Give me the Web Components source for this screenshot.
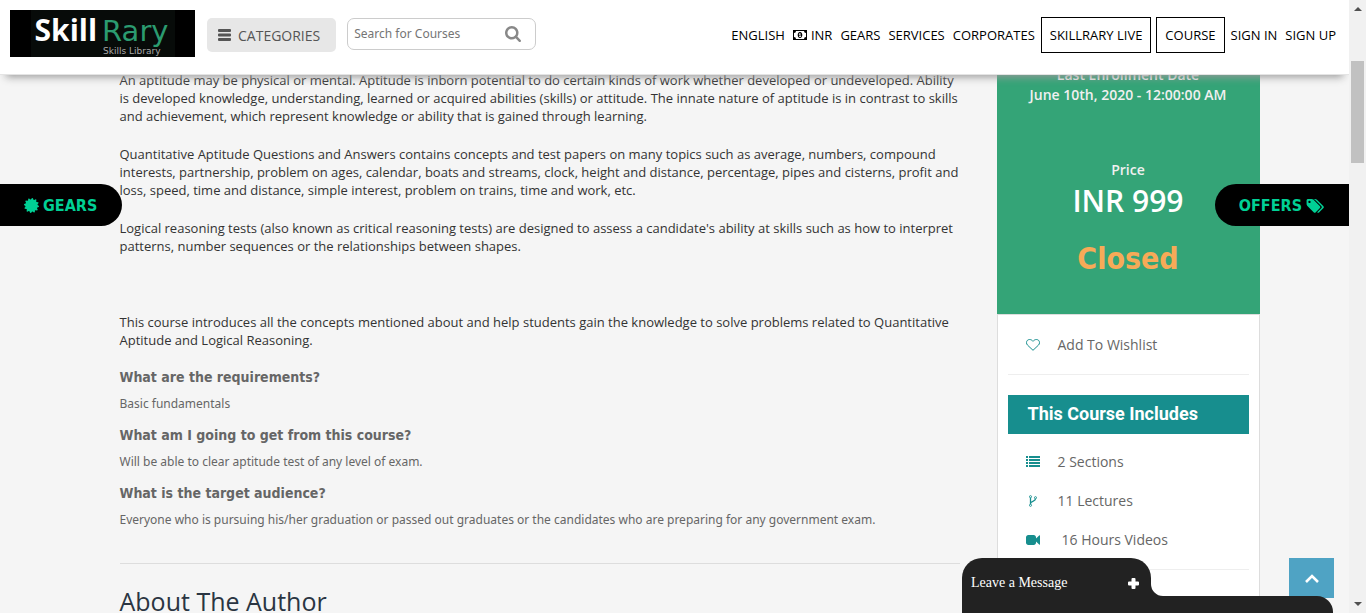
<!DOCTYPE html>
<html lang="en">
<head>
<meta charset="utf-8">
<title>SkillRary - Course</title>
<style>
html,body{margin:0;height:100%;overflow:hidden}
body{background:#f5f5f5;font-family:"Open Sans","Noto Sans",sans-serif;color:#333}
</style>
</head>
<body>
<course-page></course-page>
<script>
const burst = Array.from({length:48},(_,i)=>{const r=i%4<2?100:82,a=Math.PI*(i+.5)/24;return (100+r*Math.cos(a)).toFixed(1)+','+(100+r*Math.sin(a)).toFixed(1)}).join(' ');
const ICONS = {
  bars:['0 0 13 12','<path d="M1 0h11q1 0 1 1v1q0 1-1 1H1q-1 0-1-1V1q0-1 1-1zM1 4.500h11q1 0 1 1v1q0 1-1 1H1q-1 0-1-1v-1q0-1 1-1zM1 9h11q1 0 1 1v1q0 1-1 1H1q-1 0-1-1v-1q0-1 1-1z"/>'],
  search:['64 128 1664 1664','<path d="M1216 832q0-185-131.500-316.500t-316.500-131.500-316.500 131.500-131.500 316.500 131.500 316.500 316.500 131.500 316.500-131.500 131.500-316.500zm512 832q0 52-38 90t-90 38q-54 0-90-38l-343-342q-179 124-399 124-143 0-273.500-55.500t-225-150-150-225-55.500-273.500 55.500-273.500 150-225 225-150 273.500-55.500 273.500 55.500 225 150 150 225 55.500 273.500q0 220-124 399l343 343q37 37 37 90z"/>'],
  money:['0 0 14 10','<path fill-rule="evenodd" d="M0 0h14v10H0zM1 3v4q2 0 2 2h8q0-2 2-2V3q-2 0-2-2H3q0 2-2 2z"/><path fill-rule="evenodd" d="M7 2C5.400 2 4.700 3.500 4.700 5S5.400 8 7 8s2.300-1.500 2.300-3S8.600 2 7 2zM6.600 3.200h.9v3h.6v.7H6v-.7h.6V4.400l-.6.300-.2-.7z"/>'],
  burst:['0 0 200 200','<polygon points="'+burst+'"/>'],
  tags:['64 128 1984 1536','<path d="M576 448q0-53-37.500-90.500t-90.500-37.500-90.500 37.500-37.500 90.500 37.500 90.500 90.500 37.500 90.500-37.500 37.500-90.500zm1067 576q0 53-37 90l-491 492q-39 37-91 37-53 0-90-37l-715-716q-38-37-64.500-101t-26.500-117v-416q0-52 38-90t90-38h416q53 0 117 26.500t102 64.500l715 714q37 39 37 91zm384 0q0 53-37 90l-491 492q-39 37-91 37-36 0-59-14t-53-45l470-470q37-37 37-90 0-52-37-91l-715-714q-38-38-102-64.500t-117-26.500h224q53 0 117 26.500t102 64.500l715 714q37 39 37 91z"/>'],
  heart:['0 0 14 12','<path fill="none" stroke="currentColor" d="M7 11.300L1.600 6.200C.8 5.400.5 4.600.5 3.700.5 1.700 1.800.5 3.700.5 5 .5 6.200 1.300 7 2.300 7.800 1.300 9 .5 10.300.5c1.900 0 3.200 1.200 3.200 3.200 0 .9-.3 1.700-1.100 2.500z"/>'],
  list:['0 0 14 11','<path d="M0 0h2v2H0zM3 0h11v2H3zM0 3h2v2H0zM3 3h11v2H3zM0 6h2v2H0zM3 6h11v2H3zM0 9h2v2H0zM3 9h11v2H3z"/>'],
  fork:['0 0 8 12','<g fill="none" stroke="currentColor" stroke-width=".9"><circle cx="1.500" cy="1.700" r="1.050"/><circle cx="1.500" cy="10.300" r="1.050"/><circle cx="6.500" cy="2.700" r="1.050"/></g><path fill="none" stroke="currentColor" stroke-width="1.300" d="M1.500 2.700v6.600M6.500 3.800c0 2.800-5 2.200-5 4.600"/>'],
  video:['0 256 1792 1280','<path d="M1792 352v1088q0 42-39 59-13 5-25 5-27 0-45-19l-403-403v166q0 119-84.500 203.500t-203.500 84.500h-704q-119 0-203.500-84.500t-84.500-203.500v-704q0-119 84.500-203.500t203.500-84.500h704q119 0 203.500 84.500t84.500 203.500v165l403-402q18-19 45-19 12 0 25 5 39 17 39 59z"/>'],
  plus:['0 0 11 11','<path d="M4.500 0h2q1 0 1 1v2.500H10q1 0 1 1v2q0 1-1 1H7.500V10q0 1-1 1h-2q-1 0-1-1V7.500H1q-1 0-1-1v-2q0-1 1-1h2.500V1q0-1 1-1z"/>'],
  up:['0 0 14 9','<path fill="none" stroke="currentColor" stroke-width="2.600" d="M1 8l6-6 6 6"/>'],
  arrowup:['0 0 8 4','<path d="M0 4l4-4 4 4z"/>'],
  arrowdown:['0 0 8 4','<path d="M0 0l4 4 4-4z"/>'],
  fillet:['0 0 12 12','<path d="M0 0a12 12 0 0 0 12 12H0z"/>']
};
function define(name, html, setup){
  const t=document.createElement('template'); t.innerHTML=html;
  customElements.define(name, class extends HTMLElement{
    constructor(){super();this.attachShadow({mode:'open'}).append(t.content.cloneNode(true));}
    connectedCallback(){ if(setup) setup(this,this.shadowRoot); }
  });
}
const BASE=':host,*{box-sizing:border-box}a{color:inherit;text-decoration:none}button{font:inherit;color:inherit;border:0;padding:0;background:none}';

define('ui-icon','<style>:host{display:inline-block;flex:none}svg{display:block;width:100%;height:100%;fill:currentColor}</style><svg aria-hidden="true"></svg>',(el,r)=>{
  const [box,body]=ICONS[el.getAttribute('name')], s=r.querySelector('svg');
  s.setAttribute('viewBox',box); s.innerHTML=body;
});

define('site-logo',`<style>${BASE}
:host{display:block;flex:none}
a{display:grid;justify-content:center;width:185px;height:47px;background:#000}
.in{width:144px;background:#070b09;display:grid;grid-template-rows:34px 10px;padding:2px 4px 0}
.n{font-size:30px;line-height:36px;color:#fff;white-space:nowrap;display:flex;align-items:baseline;gap:5px}
.n i{font:29px/36px "DejaVu Sans",sans-serif;color:#2b9b70}
small{font:9px/10px "DejaVu Sans",sans-serif;color:#aaa;text-align:right;padding-right:10px;white-space:nowrap}
</style><a href="#"><span class="in"><span class="n"><b>Skill</b><i>Rary</i></span><small>Skills Library</small></span></a>`);

define('nav-link',`<style>${BASE}
:host{display:block;font-size:13px;line-height:18px;color:#000;white-space:nowrap}
a{display:flex;align-items:center;gap:4px;height:36px}
:host([boxed]) a{border:1px solid #000;padding:0 8px}
</style><a href="#"><slot></slot></a>`);

define('site-header',`<style>${BASE}
:host{display:flex;align-items:flex-start;position:absolute;inset:0 0 auto;height:75px;padding:10px 13px 0 10px;background:#fff;border-bottom:1px solid #e4e4e4;box-shadow:0 8px 8px -6px #999;z-index:3}
.cat{display:flex;align-items:center;gap:7px;height:34px;margin:8px 11px 0 12px;padding:0 16px 0 11px;background:#e7e7e7;border-radius:5px;font-size:14px;color:#555}
form{display:flex;align-items:center;width:189px;height:32px;margin-top:8px;border:1px solid #ccc;border-radius:7px;padding:0 14px 0 6px}
input{flex:1;min-width:0;border:0;outline:0;padding:0;background:none;font:12px/18px "Noto Sans",sans-serif;color:#555}
input::placeholder{color:#757575;opacity:1}
form button{display:flex;color:#888}
nav{display:flex;margin:7px 0 0 auto}
nav>*{margin-right:8px}
nav>.t{margin-right:6px}nav>.s{margin-right:5px}nav>:last-child{margin-right:0}
.bars{width:13px;height:12px}.se{width:16px;height:16px}.mo{width:14px;height:10px}
</style>
<site-logo></site-logo>
<button class="cat"><ui-icon class="bars" name="bars"></ui-icon>CATEGORIES</button>
<form role="search"><input type="text" aria-label="Search for Courses" placeholder="Search for Courses"><button type="button" aria-label="Search"><ui-icon class="se" name="search"></ui-icon></button></form>
<nav><nav-link>ENGLISH</nav-link><nav-link><ui-icon class="mo" name="money"></ui-icon>INR</nav-link><nav-link>GEARS</nav-link><nav-link>SERVICES</nav-link><nav-link class="t">CORPORATES</nav-link><nav-link boxed class="s">SKILLRARY LIVE</nav-link><nav-link boxed class="t">COURSE</nav-link><nav-link>SIGN IN</nav-link><nav-link>SIGN UP</nav-link></nav>`);

define('faq-item',`<style>
:host{display:block;color:#666}
h4{margin:0;font:bold 14px/22px "DejaVu Sans Condensed","Noto Sans",sans-serif}
p{margin:5px 0 9px;font:12px/22px "Noto Sans",sans-serif}
</style><h4><slot name="q"></slot></h4><p><slot></slot></p>`);

define('course-description',`<style>
:host{display:block;padding-top:71px}
p{margin:0 0 20px;font-size:13px;line-height:18px;color:#333}
.gap{margin-bottom:58px}.last{margin-bottom:17px}
hr{border:0;border-top:1px solid #ddd;margin:32px 0 20px}
h2{margin:0;font-size:25px;font-weight:400;line-height:34px;color:#2a3542}
</style>
<p>An aptitude may be physical or mental. Aptitude is inborn potential to do certain kinds of work whether developed or undeveloped. Ability is developed knowledge, understanding, learned or acquired abilities (skills) or attitude. The innate nature of aptitude is in contrast to skills and achievement, which represent knowledge or ability that is gained through learning.</p>
<p>Quantitative Aptitude Questions and Answers contains concepts and test papers on many topics such as average, numbers, compound interests, partnership, problem on ages, calendar, boats and streams, clock, height and distance, percentage, pipes and cisterns, profit and loss, speed, time and distance, simple interest, problem on trains, time and work, etc.</p>
<p class="gap">Logical reasoning tests (also known as critical reasoning tests) are designed to assess a candidate's ability at skills such as how to interpret patterns, number sequences or the relationships between shapes.</p>
<p class="last">This course introduces all the concepts mentioned about and help students gain the knowledge to solve problems related to Quantitative Aptitude and Logical Reasoning.</p>
<faq-item><span slot="q">What are the requirements?</span>Basic fundamentals</faq-item>
<faq-item><span slot="q">What am I going to get from this course?</span>Will be able to clear aptitude test of any level of exam.</faq-item>
<faq-item><span slot="q">What is the target audience?</span>Everyone who is pursuing his/her graduation or passed out graduates or the candidates who are preparing for any government exam.</faq-item>
<hr><h2>About The Author</h2>`);

define('price-panel',`<style>
:host{display:block;background:#34a477;color:#fff;text-align:center;box-sizing:border-box;padding:65px 0 34px}
p{margin:0;font-weight:600;font-size:14px;line-height:20px;color:#f0f0f0}
.pr{margin-top:55px}
.amt{font-size:30px;line-height:42px;color:#fff}
.st{margin-top:16px;font:bold 30px/42px "DejaVu Sans Condensed","Noto Sans",sans-serif;color:#f7aa57}
</style><p>Last Enrollment Date</p><p>June 10th, 2020 - 12:00:00 AM</p><p class="pr">Price</p><p class="amt">INR 999</p><p class="st">Closed</p>`);

define('feature-row',`<style>
:host{display:flex;align-items:center;height:39px;padding-left:18px;font-size:14px;line-height:20px;color:#666}
.i{display:grid;place-items:center;width:14px;margin-right:18px;color:#178e8e}
</style><span class="i"><slot name="icon"></slot></span><slot></slot>`);

define('course-card',`<style>
${BASE}
:host{display:block;background:#fff;border:1px solid #ddd;padding:10px 10px 80px}
hr{border:0;border-top:1px solid #eee;margin:10px 0 20px}
h3{margin:0 0 8px;background:#178e8e;color:#fff;font:bold 18px/37px Roboto,sans-serif;padding:0 20px 2px}
.he{width:14px;height:12px}.li{width:14px;height:11px}.fo{width:8px;height:12px}.vi{width:14px;height:10px}
.v{padding-left:4px}
</style>
<feature-row><ui-icon class="he" slot="icon" name="heart"></ui-icon><a href="#">Add To Wishlist</a></feature-row><hr>
<h3>This Course Includes</h3>
<feature-row><ui-icon class="li" slot="icon" name="list"></ui-icon>2 Sections</feature-row>
<feature-row><ui-icon class="fo" slot="icon" name="fork"></ui-icon>11 Lectures</feature-row>
<feature-row><ui-icon class="vi" slot="icon" name="video"></ui-icon><span class="v">16 Hours Videos</span></feature-row><hr>`);

define('side-tab',`<style>${BASE}
:host{position:absolute;top:184px;z-index:2}
:host([side=left]){left:0}:host([side=right]){right:0}
a{display:flex;align-items:center;gap:4px;height:42px;padding:1px 25px 0 24px;background:#000;color:#00d095;font:bold 16px/41px "DejaVu Sans Condensed","Noto Sans",sans-serif}
:host([side=left]) a{border-radius:0 21px 21px 0}:host([side=right]) a{border-radius:21px 0 0 21px}
</style><a href="#"><slot></slot></a>`);

define('chat-widget',`<style>${BASE}
:host{display:block;position:absolute;right:16px;bottom:0;width:371px;z-index:3}
.row{display:flex;align-items:flex-end;height:38px}
button{display:flex;align-items:center;justify-content:space-between;width:189px;height:38px;padding:12px 12px 0 9px;background:#222;color:#fff;border-radius:20px 20px 0 0;font:14px/20px "Liberation Serif",serif}
.p{width:11px;height:11px}.f{width:12px;height:12px;color:#222}
.bar{height:17px;background:#222;border-radius:0 16px 0 0}
</style><div class="row"><button>Leave a Message<ui-icon class="p" name="plus"></ui-icon></button><ui-icon class="f" name="fillet"></ui-icon></div><div class="bar"></div>`);

define('top-button',`<style>${BASE}
:host{position:absolute;right:15px;bottom:15px;z-index:2}
button{display:grid;place-items:center;width:45px;height:40px;background:#4fa3c4;color:#fff}
.u{width:14px;height:9px}
</style><button aria-label="Back to top"><ui-icon class="u" name="up"></ui-icon></button>`);

define('scroll-rail',`<style>
:host{display:flex;flex-direction:column;align-items:center;width:17px;background:#f1f1f1;color:#505050;padding:7px 0;box-sizing:border-box}
.a{width:8px;height:4px}.t{width:13px;height:102px;background:#c1c1c1;margin:50px 0 auto}
</style><ui-icon class="a" name="arrowup"></ui-icon><div class="t"></div><ui-icon class="a" name="arrowdown"></ui-icon>`);

define('course-page',`<style>
:host{display:grid;grid-template-columns:minmax(0,1fr) auto;height:100vh}
.view{position:relative;overflow:hidden}
main{display:grid;grid-template-columns:minmax(0,1fr) 263px;gap:37px;box-sizing:border-box;max-width:1170px;margin:0 auto;padding-left:30px;align-items:start}
.b{width:15px;height:15px}.g{width:18px;height:14px}
</style>
<div class="view"><site-header></site-header>
<main><course-description></course-description><aside><price-panel></price-panel><course-card></course-card></aside></main>
<side-tab side="left"><ui-icon class="b" name="burst"></ui-icon>GEARS</side-tab>
<side-tab side="right">OFFERS<ui-icon class="g" name="tags"></ui-icon></side-tab>
<top-button></top-button><chat-widget></chat-widget></div><scroll-rail></scroll-rail>`);
</script>
</body>
</html>
